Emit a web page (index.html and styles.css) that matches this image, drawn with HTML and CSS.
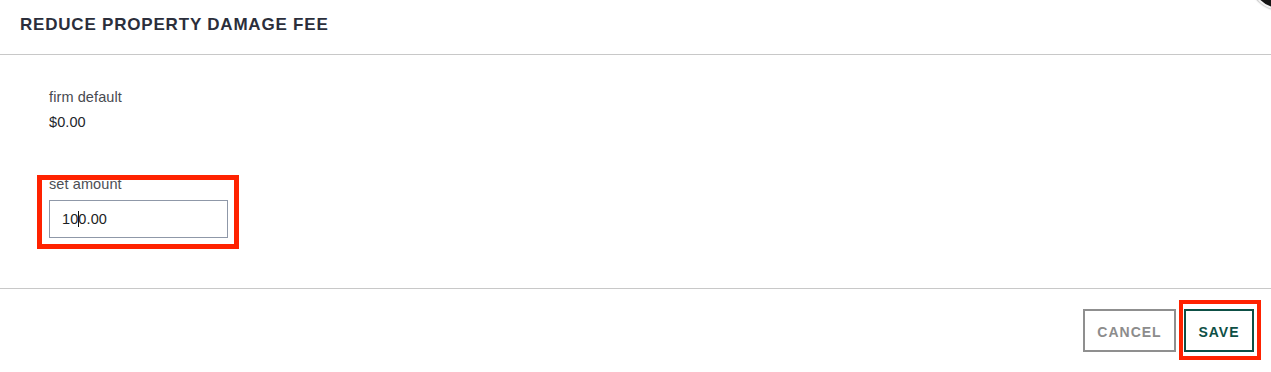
FILE: index.html
```html
<!DOCTYPE html>
<html lang="en">
<head>
<meta charset="utf-8">
<title>Reduce Property Damage Fee</title>
<link rel="stylesheet" href="styles.css">
</head>
<body>
<div class="modal">
  <span class="close-btn" aria-hidden="true"></span>
  <header class="modal-header">
    <h1 class="modal-title">REDUCE PROPERTY DAMAGE FEE</h1>
  </header>
  <section class="modal-body">
    <div class="info">
      <div class="info-label">firm default</div>
      <div class="info-value">$0.00</div>
    </div>
    <div class="field">
      <label class="field-label">set amount</label>
      <div class="field-input" role="textbox">10<span class="caret"></span>0.00</div>
      <span class="highlight highlight-field"></span>
    </div>
  </section>
  <footer class="modal-footer">
    <button class="btn btn-cancel" type="button">CANCEL</button>
    <div class="btn-wrap">
      <button class="btn btn-save" type="button">SAVE</button>
      <span class="highlight highlight-save"></span>
    </div>
  </footer>
</div>
</body>
</html>
```

FILE: styles.css
```css
* { box-sizing: border-box; }

html, body {
  margin: 0;
  padding: 0;
  background: #ffffff;
}

body {
  font-family: "Liberation Sans", Arial, sans-serif;
  color: #2b2e3b;
  width: 1271px;
  height: 372px;
  overflow: hidden;
}

.modal {
  position: relative;
  width: 1271px;
  height: 372px;
  background: #fff;
}

.close-btn {
  position: absolute;
  top: -50px;
  right: -39px;
  width: 60px;
  height: 60px;
  border-radius: 50%;
  background: #141414;
  border: 2px solid #f4f4f4;
  box-shadow: 0 0 2px rgba(0, 0, 0, 0.55);
}

.modal-header {
  height: 55px;
  padding: 15px 20px 0;
  border-bottom: 1px solid #c8c8c8;
}

.modal-title {
  margin: 0;
  font-size: 17px;
  line-height: 20px;
  font-weight: 700;
  letter-spacing: 0.8px;
  color: #2b2e3b;
}

.modal-body {
  height: 234px;
  padding: 32px 0 0 49px;
  border-bottom: 1px solid #c8c8c8;
}

.info-label,
.info-value,
.field-label {
  display: block;
  font-size: 14.5px;
  line-height: 20px;
  letter-spacing: 0.1px;
}

.info-label { color: #474a50; }

.info-value {
  margin-top: 5px;
  color: #23252b;
}

.field {
  position: relative;
  width: 179px;
  margin-top: 42px;
}

.field-label {
  color: #4c4f55;
  margin-bottom: 6px;
}

.field-input {
  width: 179px;
  height: 38px;
  border: 1px solid #8f98a8;
  padding: 0 12px;
  font-size: 14.5px;
  line-height: 36px;
  letter-spacing: 0.1px;
  color: #1c1e24;
  background: #fff;
}

.caret {
  display: inline-block;
  width: 1px;
  height: 16px;
  margin: 0 -0.5px;
  vertical-align: -3px;
  background: #111;
}

.highlight {
  position: absolute;
  border: 5px solid #ff2200;
  pointer-events: none;
}

.highlight-field {
  left: -12px;
  top: 1px;
  right: -11px;
  bottom: -11px;
}

.modal-footer {
  display: flex;
  justify-content: flex-end;
  align-items: flex-start;
  gap: 8px;
  padding: 20px 17px 0 0;
}

.btn {
  font-family: "Liberation Sans", Arial, sans-serif;
  font-size: 14px;
  font-weight: 700;
  line-height: 20px;
  letter-spacing: 1px;
  height: 43px;
  padding: 11px 12px 8px;
  background: #fff;
  border: 2px solid;
  border-radius: 0;
  cursor: pointer;
}

.btn-cancel {
  width: 93px;
  color: #8c8c8c;
  border-color: #8f8f8f;
}

.btn-wrap {
  position: relative;
}

.btn-save {
  width: 70px;
  color: #0d4f45;
  border-color: #0d4f45;
}

.highlight-save {
  border-width: 4.5px;
  left: -5px;
  right: -7px;
  top: -9px;
  bottom: -8px;
}
```
